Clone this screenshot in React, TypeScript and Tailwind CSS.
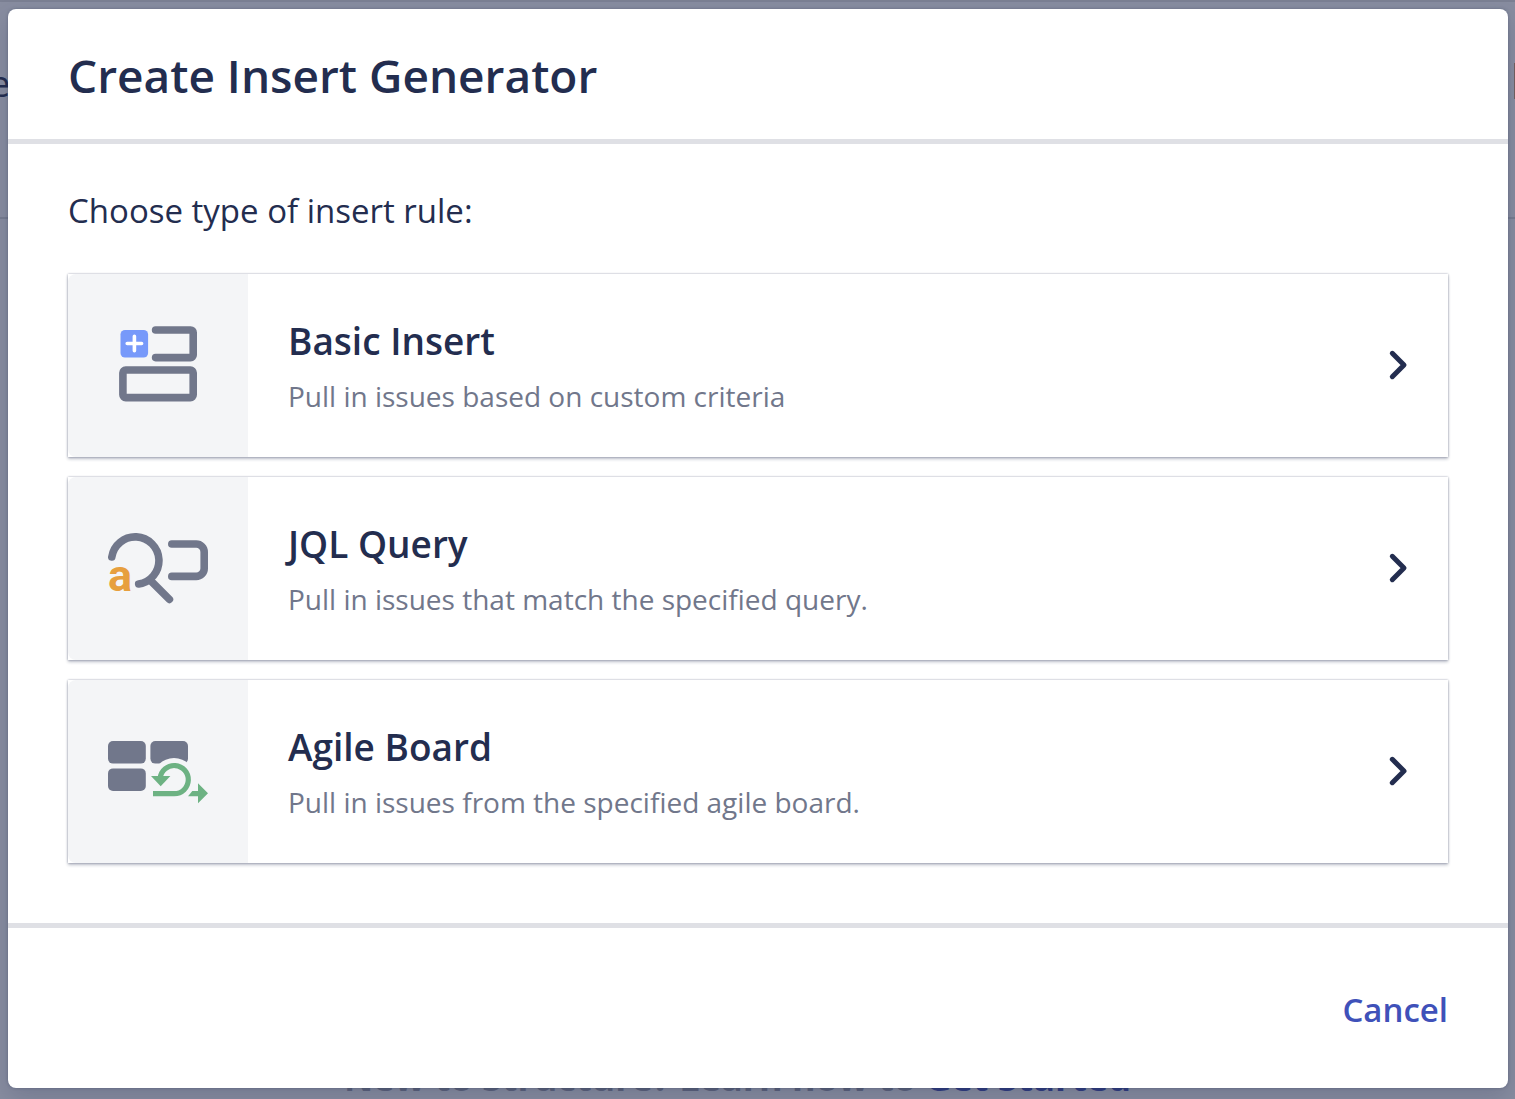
import type { ReactNode } from "react";

function BasicInsertIcon() {
  return (
    <svg viewBox="0 0 100 100" className="size-[100px]" fill="none" aria-hidden="true">
      <rect x="12.5" y="16" width="27.6" height="27.6" rx="4.5" fill="#7799fa" />
      <path d="M19.2 29.5h14.4M26.4 22.3v14.4" stroke="#fff" strokeWidth="3.6" strokeLinecap="round" />
      <g stroke="#71778b" strokeWidth="7.6" strokeLinecap="round">
        <path d="M47.6 16H82.6a2.6 2.6 0 0 1 2.6 2.6V41a2.6 2.6 0 0 1-2.6 2.6H47.6" />
        <rect x="14.9" y="56" width="70.3" height="27.6" rx="2.8" />
      </g>
    </svg>
  );
}

function JqlQueryIcon() {
  return (
    <svg viewBox="0 -1 100 100" className="size-[100px]" fill="none" aria-hidden="true">
      <g stroke="#71778b" strokeWidth="7.6" strokeLinecap="round">
        <path d="M3.8 39A23.7 23.7 0 1 1 30.7 66" />
        <path d="M42 62L61.4 81.4" />
        <path d="M63.8 26H88.2a8 8 0 0 1 8 8V50.4a8 8 0 0 1-8 8H63.8" />
      </g>
      <text x="0" y="73" fill="#e79f3e" fontSize="45" fontWeight="700" fontFamily="Roboto, sans-serif">
        a
      </text>
    </svg>
  );
}

function AgileBoardIcon() {
  return (
    <svg viewBox="0 -1 100 100" className="size-[100px]" fill="none" aria-hidden="true">
      <g fill="#71778b">
        <rect x="0" y="20" width="37.8" height="22.6" rx="5" />
        <rect x="42.4" y="20" width="37.6" height="22.6" rx="5" />
        <rect x="0" y="47.4" width="37.8" height="22.6" rx="5" />
      </g>
      <circle cx="66" cy="58.7" r="21.6" fill="#f4f5f7" />
      <path d="M45 72.7H66.2A14.1 14.1 0 1 0 52.2 57" stroke="#6db283" strokeWidth="5.2" />
      <path d="M43 55H62.4L52.7 65.2Z" fill="#6db283" />
      <path d="M80 75.3L84.3 70H90V62.3L100 72.3L90 82.3V75.3Z" fill="#6db283" />
    </svg>
  );
}

function Chevron() {
  return (
    <svg viewBox="0 0 20 32" className="mb-0.5 h-8 w-5 shrink-0" fill="none" aria-hidden="true">
      <path d="M4.3 4.3L16 16L4.3 27.7" stroke="#232d4f" strokeWidth="5" strokeLinecap="round" strokeLinejoin="round" />
    </svg>
  );
}

const rules: { title: string; description: string; icon: ReactNode }[] = [
  { title: "Basic Insert", description: "Pull in issues based on custom criteria", icon: <BasicInsertIcon /> },
  { title: "JQL Query", description: "Pull in issues that match the specified query.", icon: <JqlQueryIcon /> },
  { title: "Agile Board", description: "Pull in issues from the specified agile board.", icon: <AgileBoardIcon /> },
];

function Backdrop() {
  return (
    <div className="absolute inset-0 overflow-hidden bg-[#888da0]" aria-hidden="true">
      <div className="absolute inset-x-0 top-0 h-0.5 bg-[#7b8093]" />
      <div className="absolute inset-x-0 top-[217px] h-0.5 bg-[#777d90]" />
      <span className="absolute top-16 -left-2.5 text-4xl text-[#232d4f]">e</span>
      <div className="absolute top-[63px] right-0 h-9 w-px bg-[#74605f]" />
      <p className="absolute inset-x-0 bottom-0 pr-10 text-center text-[36px] leading-[42px] font-bold whitespace-nowrap text-[#5c637b]">
        New to Structure? Learn how to <span className="text-[#2f3b80]">Get Started</span>
      </p>
    </div>
  );
}

export default function App() {
  return (
    <div className="relative min-h-screen px-2 pt-[9px] pb-[11px] font-['Open_Sans',sans-serif] text-[#232d4f]">
      <Backdrop />
      <section
        role="dialog"
        aria-labelledby="dialog-title"
        className="relative mr-[-1px] rounded-lg bg-white shadow-[0_0_3px_rgba(35,45,79,0.35),0_10px_24px_rgba(35,45,79,0.2)]"
      >
        <header className="border-b-5 border-[#dfe0e5] px-[60px] pt-9 pb-[34px]">
          <h1 id="dialog-title" className="text-[46px] leading-[60px] font-semibold">
            Create Insert Generator
          </h1>
        </header>
        <div className="px-[60px] pt-[43px] pb-[60px]">
          <p className="text-[33px] leading-[48px]">Choose type of insert rule:</p>
          <div className="mt-[39px] flex flex-col gap-5">
            {rules.map((rule) => (
              <button
                key={rule.title}
                type="button"
                className="flex items-stretch bg-white text-left shadow-[0_2px_3px_rgba(35,45,79,0.3),0_0_2px_rgba(35,45,79,0.4)]"
              >
                <span className="flex w-[180px] shrink-0 items-center justify-center rounded-l-lg bg-[#f4f5f7] pb-[3px]">
                  {rule.icon}
                </span>
                <span className="flex grow items-center justify-between px-10 pt-[39px] pb-[39px]">
                  <span className="flex flex-col gap-[5px]">
                    <span className="text-[37px] leading-[56px] font-semibold">{rule.title}</span>
                    <span className="text-[28px] leading-[44px] text-[#71778b]">{rule.description}</span>
                  </span>
                  <Chevron />
                </span>
              </button>
            ))}
          </div>
        </div>
        <footer className="flex justify-end border-t-5 border-[#dfe0e5] px-[60px] pt-[58px] pb-[54px]">
          <button type="button" className="text-[33px] leading-[48px] font-semibold text-[#3f51b9]">
            Cancel
          </button>
        </footer>
      </section>
    </div>
  );
}
